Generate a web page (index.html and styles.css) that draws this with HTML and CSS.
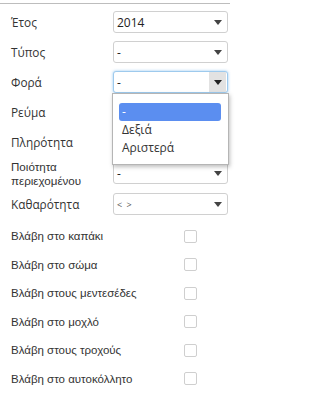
FILE: index.html
```html
<!DOCTYPE html>
<html lang="el">
<head>
<meta charset="utf-8">
<title>Φόρμα</title>
<link rel="stylesheet" href="styles.css">
</head>
<body>
<div class="page">
  <div class="rule"></div>
  <div class="form">
    <div class="row">
      <div class="label">Έτος</div>
      <div class="select"><span class="value">2014</span><span class="arrow"><svg width="8" height="5" viewBox="0 0 8 5"><path d="M0 0H8L4 5Z" fill="#444"/></svg></span></div>
    </div>
    <div class="row">
      <div class="label">Τύπος</div>
      <div class="select"><span class="value">-</span><span class="arrow"><svg width="8" height="5" viewBox="0 0 8 5"><path d="M0 0H8L4 5Z" fill="#444"/></svg></span></div>
    </div>
    <div class="row">
      <div class="label">Φορά</div>
      <div class="select focused"><span class="value">-</span><span class="arrow"><svg width="8" height="5" viewBox="0 0 8 5"><path d="M0 0H8L4 5Z" fill="#222"/></svg></span>
        <div class="menu">
          <div class="option active">-</div>
          <div class="option">Δεξιά</div>
          <div class="option">Αριστερά</div>
        </div>
      </div>
    </div>
    <div class="row">
      <div class="label">Ρεύμα</div>
      <div class="select"><span class="value">-</span><span class="arrow"><svg width="8" height="5" viewBox="0 0 8 5"><path d="M0 0H8L4 5Z" fill="#444"/></svg></span></div>
    </div>
    <div class="row">
      <div class="label">Πληρότητα</div>
      <div class="select"><span class="value">-</span><span class="arrow"><svg width="8" height="5" viewBox="0 0 8 5"><path d="M0 0H8L4 5Z" fill="#444"/></svg></span></div>
    </div>
    <div class="row">
      <div class="label two"><div>Ποιότητα</div><div>περιεχομένου</div></div>
      <div class="select"><span class="value">-</span><span class="arrow"><svg width="8" height="5" viewBox="0 0 8 5"><path d="M0 0H8L4 5Z" fill="#444"/></svg></span></div>
    </div>
    <div class="row">
      <div class="label">Καθαρότητα</div>
      <div class="select"><span class="value small">&lt; &gt;</span><span class="arrow"><svg width="8" height="5" viewBox="0 0 8 5"><path d="M0 0H8L4 5Z" fill="#444"/></svg></span></div>
    </div>
  </div>
  <div class="checks">
    <div class="check-row"><span class="clabel">Βλάβη στο καπάκι</span><span class="box"></span></div>
    <div class="check-row"><span class="clabel">Βλάβη στο σώμα</span><span class="box"></span></div>
    <div class="check-row"><span class="clabel">Βλάβη στους μεντεσέδες</span><span class="box"></span></div>
    <div class="check-row"><span class="clabel">Βλάβη στο μοχλό</span><span class="box"></span></div>
    <div class="check-row"><span class="clabel">Βλάβη στους τροχούς</span><span class="box"></span></div>
    <div class="check-row"><span class="clabel">Βλάβη στο αυτοκόλλητο</span><span class="box"></span></div>
  </div>
</div>
</body>
</html>
```
FILE: styles.css
```css
html, body {
  margin: 0;
  padding: 0;
  background: #fff;
}
body {
  font-family: "Liberation Sans", Arial, sans-serif;
  font-size: 12px;
  color: #333;
}
.page {
  width: 235px;
  padding-top: 3px;
}
.rule {
  width: 230px;
  height: 1px;
  background: #bdbdbd;
}
.form {
  display: flex;
  flex-direction: column;
  gap: 8px;
  padding: 7px 0 0 11px;
}
.row {
  display: flex;
  align-items: center;
  min-height: 22px;
}
.label {
  width: 102px;
  line-height: 14px;
  font-family: "Open Sans", "Noto Sans", sans-serif;
  font-size: 11.8px;
}
.label.two {
  font-family: "Liberation Sans", Arial, sans-serif;
  font-size: 11.6px;
  line-height: 13.5px;
  margin-top: -1px;
  margin-bottom: -2px;
}
.select {
  position: relative;
  width: 115px;
  height: 22px;
  box-sizing: border-box;
  border: 1px solid #d0d0d0;
  border-radius: 3px;
  background: #fff;
  display: flex;
  align-items: center;
  justify-content: space-between;
  padding-left: 3px;
  font-family: "Open Sans", "Noto Sans", sans-serif;
  font-size: 12px;
  color: #222;
}
.select .value.small {
  font-size: 9px;
  color: #555;
  letter-spacing: 1px;
}
.arrow {
  width: 17px;
  align-self: stretch;
  display: flex;
  align-items: center;
  justify-content: center;
  margin-right: 1px;
}
.select.focused {
  border-color: #9ecaed;
  box-shadow: 0 0 3px rgba(102, 175, 233, 0.7);
}
.select.focused .arrow {
  background: #e2e2e2;
}
.menu {
  position: absolute;
  top: 21px;
  left: -2px;
  width: 117px;
  box-sizing: border-box;
  padding: 9px 7px 7px 6px;
  background: #fff;
  border: 1px solid #b5b5b5;
  box-shadow: 1px 2px 4px rgba(0, 0, 0, 0.25);
  z-index: 5;
  color: #333;
}
.option {
  height: 18px;
  line-height: 18px;
  padding-left: 3px;
  font-size: 12px;
}
.option.active {
  background: #5b8ef0;
  color: #fff;
  border-radius: 3px;
}
.checks {
  display: flex;
  flex-direction: column;
  padding: 7px 0 0 11px;
}
.check-row {
  display: flex;
  align-items: center;
  height: 28.5px;
}
.clabel {
  width: 173px;
  font-size: 11.5px;
}
.box {
  width: 13px;
  height: 13px;
  box-sizing: border-box;
  border: 1px solid #cfcfcf;
  border-radius: 2px;
  background: #fff;
}
```
